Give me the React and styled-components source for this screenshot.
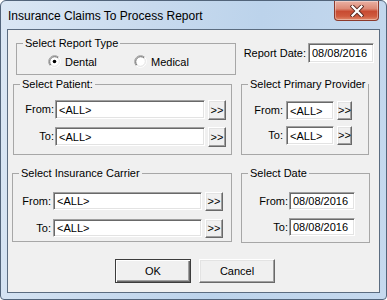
import React from 'react';
import styled, { createGlobalStyle } from 'styled-components';

const GlobalStyle = createGlobalStyle`
  html, body {
    margin: 0;
    padding: 0;
    background: #ffffff;
  }
  body {
    font-family: "Liberation Sans", Arial, sans-serif;
    font-size: 11px;
    color: #000;
  }
  * {
    box-sizing: border-box;
  }
`;

// Window chrome
const Window = styled.div`
  width: 387px;
  height: 300px;
  border: 1px solid #52647a;
  border-radius: 6px 6px 4px 4px;
  background: linear-gradient(100deg, #dbe7f4 0%, #c8daee 35%, #bcd3eb 60%, #c6d9ee 100%);
  padding: 0 6px 6px;
  display: flex;
  flex-direction: column;
  overflow: hidden;
`;

const TitleBar = styled.div`
  height: 28px;
  display: flex;
  justify-content: space-between;
  align-items: flex-start;
`;

const TitleText = styled.div`
  padding: 8px 0 0 1px;
  font-size: 12px;
  line-height: 14px;
  color: #000;
`;

const CloseButton = styled.div`
  width: 45px;
  height: 20px;
  margin-right: 1px;
  border: 1px solid #8c3a2c;
  border-top: none;
  border-radius: 0 0 4px 4px;
  background: linear-gradient(180deg, #eab1a4 0%, #dd8a76 40%, #c84b32 55%, #cf5a3e 80%, #e08a6c 100%);
  box-shadow: inset 0 0 0 1px rgba(255, 255, 255, 0.35);
  display: flex;
  align-items: center;
  justify-content: center;
`;

const Client = styled.div`
  flex: 1;
  background: #f0f0f0;
  border: 1px solid #5b6c80;
  display: flex;
  flex-direction: column;
`;

// Layout rows
const Row = styled.div`
  display: flex;
  align-items: flex-start;
  margin-top: ${p => p.mt}px;
  padding-left: ${p => p.pl}px;
  gap: ${p => p.gap || 0}px;
`;

// Group boxes
const GroupBox = styled.fieldset`
  margin: 0;
  min-width: 0;
  width: ${p => p.w}px;
  height: ${p => p.h}px;
  padding: ${p => p.pt}px 0 0 6px;
  border: 1px solid #a7a7a7;
  display: flex;
  flex-direction: column;
`;

const Legend = styled.legend`
  padding: 0 2px;
  font-size: 11px;
  line-height: 13px;
`;

const FieldRow = styled.div`
  display: flex;
  align-items: flex-start;
  margin-top: ${p => p.mt || 0}px;
`;

const FieldLabel = styled.label`
  width: ${p => p.w}px;
  margin-right: ${p => p.mr}px;
  height: ${p => p.h}px;
  line-height: ${p => p.h}px;
  text-align: right;
  white-space: nowrap;
`;

const TextBox = styled.input`
  width: ${p => p.w}px;
  height: ${p => p.h}px;
  margin: 0;
  padding: 0 0 0 3px;
  background: #fff;
  border: 1px solid;
  border-color: #a0a0a0 #ffffff #ffffff #a0a0a0;
  box-shadow: inset 1px 1px 0 #696969, inset -1px -1px 0 #e3e3e3;
  font-family: "Liberation Sans", Arial, sans-serif;
  font-size: 11px;
  color: #000;
  outline: none;
`;

const BrowseButton = styled.button`
  width: ${p => p.w}px;
  height: ${p => p.h}px;
  margin: 0 0 0 3px;
  padding: 0;
  background: #f0f0f0;
  border: 1px solid;
  border-color: #ffffff #696969 #696969 #ffffff;
  box-shadow: inset -1px -1px 0 #a0a0a0, inset 1px 1px 0 #e3e3e3;
  font-family: "Liberation Sans", Arial, sans-serif;
  font-size: 11px;
  line-height: 1;
  color: #000;
`;

// Report type radios
const RadioRow = styled.div`
  display: flex;
  align-items: center;
  height: 13px;
  margin-top: 5px;
  padding-left: 25px;
`;

const RadioOption = styled.label`
  display: flex;
  align-items: center;
  gap: 4px;
  width: ${p => (p.w ? `${p.w}px` : 'auto')};
  font-size: 11px;
`;

const ReportDate = styled.div`
  display: flex;
  align-items: center;
  margin: 6px 5px 0 auto;
`;

const DateLabel = styled.span`
  margin-right: 2px;
  white-space: nowrap;
`;

// Bottom buttons
const ButtonRow = styled.div`
  display: flex;
  justify-content: center;
  gap: 8px;
  margin-top: 16px;
  padding-left: 3px;
`;

const DialogButton = styled.button`
  width: 76px;
  height: 24px;
  margin: 0;
  padding: 0;
  background: #f0f0f0;
  font-family: "Liberation Sans", Arial, sans-serif;
  font-size: 11px;
  color: #000;
  border: 1px solid;
  border-color: ${p => (p.primary ? '#3c3c3c' : '#ffffff #696969 #696969 #ffffff')};
  box-shadow: ${p =>
    p.primary
      ? 'inset 1px 1px 0 #ffffff, inset -1px -1px 0 #696969, inset -2px -2px 0 #a0a0a0'
      : 'inset -1px -1px 0 #a0a0a0, inset 1px 1px 0 #e3e3e3'};
`;

const RadioIcon = ({ checked }) => (
  <svg width="13" height="13" viewBox="0 0 13 13">
    <circle cx="6.5" cy="6.5" r="5" fill="#fff" />
    <path d="M2.26 10.74 A6 6 0 0 1 10.74 2.26" fill="none" stroke="#a0a0a0" strokeWidth="1" />
    <path d="M10.74 2.26 A6 6 0 0 1 2.26 10.74" fill="none" stroke="#ffffff" strokeWidth="1" />
    <path d="M2.97 10.03 A5 5 0 0 1 10.03 2.97" fill="none" stroke="#696969" strokeWidth="1" />
    <path d="M10.03 2.97 A5 5 0 0 1 2.97 10.03" fill="none" stroke="#e3e3e3" strokeWidth="1" />
    {checked && <circle cx="6.5" cy="6.5" r="1.8" fill="#000" />}
  </svg>
);

const CloseIcon = () => (
  <svg width="14" height="12" viewBox="0 0 14 12">
    <path d="M2.5 1.5 L11.5 10.5 M11.5 1.5 L2.5 10.5" stroke="#5a2a22" strokeWidth="4" strokeLinecap="square" />
    <path d="M2.5 1.5 L11.5 10.5 M11.5 1.5 L2.5 10.5" stroke="#ffffff" strokeWidth="2.2" strokeLinecap="square" />
  </svg>
);

const RangeField = ({ label, value, labelW, labelGap, boxW, h, btnW, btnH, mt }) => (
  <FieldRow mt={mt}>
    <FieldLabel w={labelW} mr={labelGap} h={h}>{label}</FieldLabel>
    <TextBox w={boxW} h={h} defaultValue={value} readOnly />
    {btnW && <BrowseButton w={btnW} h={btnH}>&gt;&gt;</BrowseButton>}
  </FieldRow>
);

const App = () => {
  return (
    <>
      <GlobalStyle />
      <Window>
        <TitleBar>
          <TitleText>Insurance Claims To Process Report</TitleText>
          <CloseButton>
            <CloseIcon />
          </CloseButton>
        </TitleBar>
        <Client>
          <Row mt={7} pl={8}>
            <GroupBox w={220} h={38} pt={0}>
              <Legend>Select Report Type</Legend>
              <RadioRow>
                <RadioOption w={86}>
                  <RadioIcon checked />
                  Dental
                </RadioOption>
                <RadioOption>
                  <RadioIcon />
                  Medical
                </RadioOption>
              </RadioRow>
            </GroupBox>
            <ReportDate>
              <DateLabel>Report Date:</DateLabel>
              <TextBox w={66} h={20} defaultValue="08/08/2016" readOnly />
            </ReportDate>
          </Row>

          <Row mt={3} pl={5} gap={9}>
            <GroupBox w={219} h={77} pt={9}>
              <Legend>Select Patient:</Legend>
              <RangeField label="From:" value="<ALL>" labelW={34} labelGap={1} boxW={150} h={19} btnW={18} btnH={20} />
              <RangeField label="To:" value="<ALL>" labelW={34} labelGap={1} boxW={150} h={19} btnW={18} btnH={20} mt={7} />
            </GroupBox>
            <GroupBox w={128} h={77} pt={10}>
              <Legend>Select Primary Provider</Legend>
              <RangeField label="From:" value="<ALL>" labelW={35} labelGap={3} boxW={48} h={19} btnW={15} btnH={19} />
              <RangeField label="To:" value="<ALL>" labelW={35} labelGap={3} boxW={48} h={19} btnW={15} btnH={19} mt={6} />
            </GroupBox>
          </Row>

          <Row mt={12} pl={4} gap={9}>
            <GroupBox w={220} h={75} pt={12}>
              <Legend>Select Insurance Carrier</Legend>
              <RangeField label="From:" value="<ALL>" labelW={32} labelGap={2} boxW={149} h={18} btnW={18} btnH={19} />
              <RangeField label="To:" value="<ALL>" labelW={32} labelGap={2} boxW={149} h={18} btnW={18} btnH={19} mt={8} />
            </GroupBox>
            <GroupBox w={129} h={76} pt={12}>
              <Legend>Select Date</Legend>
              <RangeField label="From:" value="08/08/2016" labelW={40} labelGap={1} boxW={66} h={18} />
              <RangeField label="To:" value="08/08/2016" labelW={40} labelGap={1} boxW={66} h={18} mt={8} />
            </GroupBox>
          </Row>

          <ButtonRow>
            <DialogButton primary>OK</DialogButton>
            <DialogButton>Cancel</DialogButton>
          </ButtonRow>
        </Client>
      </Window>
    </>
  );
};

export default App;
